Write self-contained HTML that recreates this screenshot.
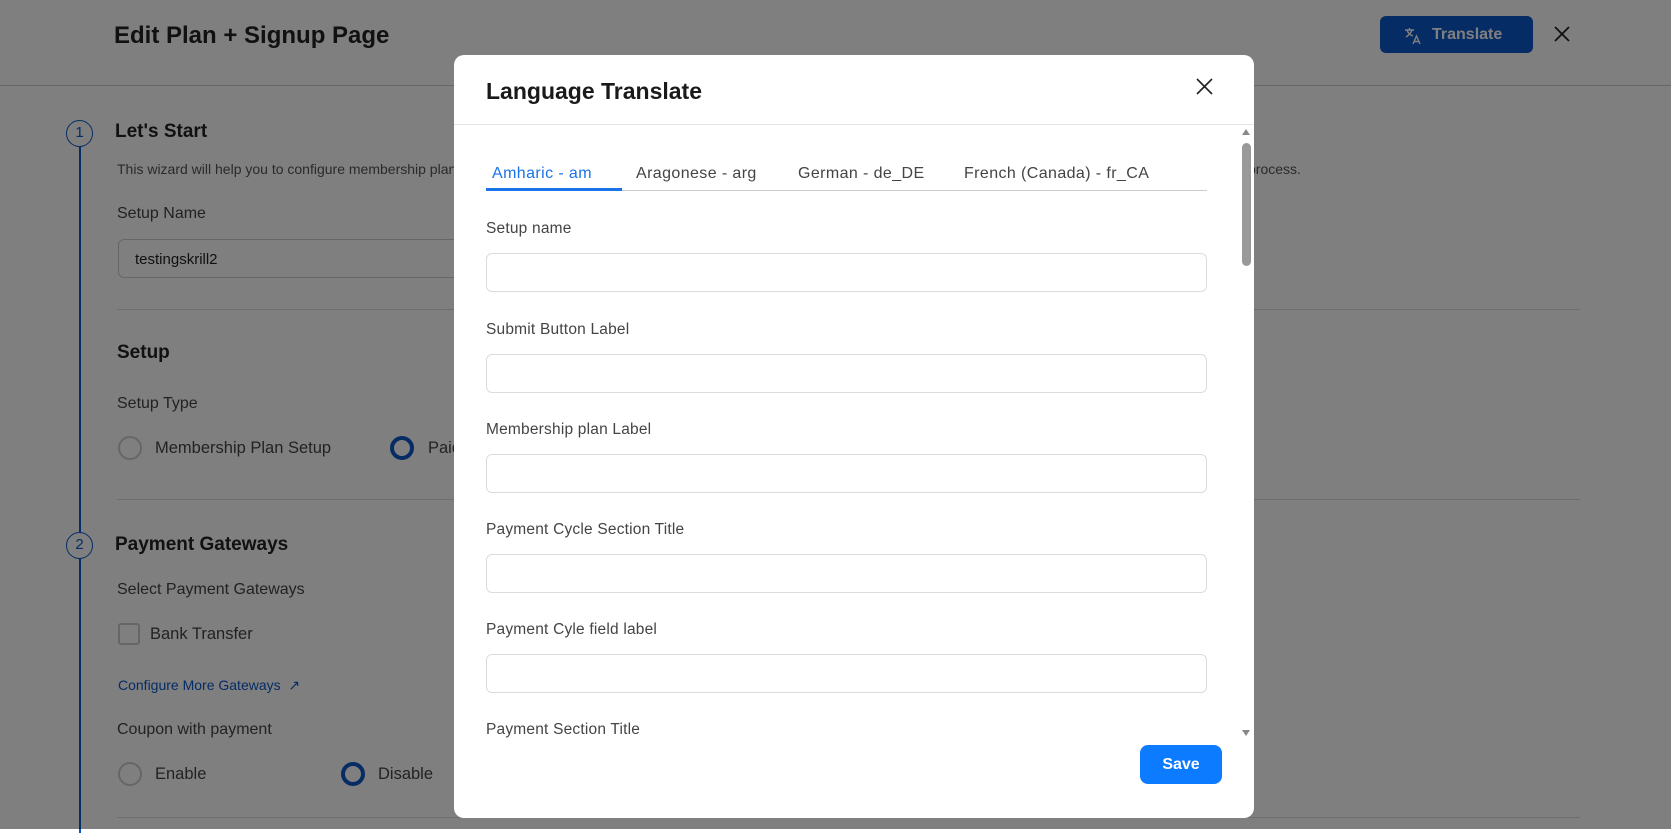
<!DOCTYPE html>
<html><head><meta charset="utf-8"><style>
*{box-sizing:border-box;margin:0;padding:0}
body{width:1671px;height:829px;overflow:hidden;background:#fff;font-family:"Liberation Sans",sans-serif;position:relative;color:#333}
.a{position:absolute;white-space:nowrap}
.hr{position:absolute;height:1px;background:#ddd}
.radio{position:absolute;width:24px;height:24px;border-radius:50%;border:2px solid #ccc}
.radio.on{border:4px solid #0a58ca}
.ov{position:absolute;left:0;top:0;width:1671px;height:829px;background:rgba(0,0,0,.5)}
.modal{position:absolute;left:454px;top:55px;width:800px;height:763px;background:#fff;border-radius:10px;overflow:hidden}
.lbl{position:absolute;left:32px;font-size:15.5px;color:#444;letter-spacing:.2px}
.inp{position:absolute;left:32px;width:721px;height:39px;border:1px solid #dcdcdc;border-radius:6px}
.tab{font-size:16px;letter-spacing:.4px;top:110px}
</style></head><body>
<div class="a" style="left:114px;top:22px;font-size:24px;font-weight:bold;color:#222">Edit Plan + Signup Page</div>
<div class="a" style="left:1380px;top:16px;width:153px;height:37px;background:#0a58ca;border-radius:6px;color:#fff;font-size:16px;font-weight:bold;padding:10px 0 0 52px">Translate</div>
<svg class="a" style="left:1403px;top:26px" width="20" height="20" viewBox="0 0 20 20" fill="none" stroke="#fff" stroke-width="1.4"><path d="M2 4h9M6.5 2v2M4 4c1 3 3 5 6 6M9 4c-1 3-3 5-6 7M10 18l3.5-8 3.5 8M11 15.5h5"/></svg>
<svg class="a" style="left:1553px;top:25px" width="18" height="18" viewBox="0 0 18 18" stroke="#222" stroke-width="1.8"><path d="M2 2l14 14M16 2L2 16"/></svg>
<div class="hr" style="left:0;top:85px;width:1671px;background:#ccc"></div>
<div class="a" style="left:79px;top:133px;width:2px;height:700px;background:#0a58ca"></div>
<div class="a" style="left:66px;top:120px;width:27px;height:27px;border-radius:50%;border:1.5px solid #0a58ca;background:#fff;color:#0a58ca;font-size:15px;text-align:center;line-height:24px">1</div>
<div class="a" style="left:66px;top:532px;width:27px;height:27px;border-radius:50%;border:1.5px solid #0a58ca;background:#fff;color:#0a58ca;font-size:15px;text-align:center;line-height:24px">2</div>
<div class="a" style="left:115px;top:121px;font-size:19px;font-weight:bold;color:#222">Let's Start</div>
<div class="a" style="left:117px;top:161px;font-size:14px;color:#555">This wizard will help you to configure membership plans and signup page for the registration</div>
<div class="a" style="left:1248px;top:161px;font-size:14px;color:#555">process.</div>
<div class="a" style="left:117px;top:205px;font-size:16px;color:#444">Setup Name</div>
<div class="a" style="left:118px;top:239px;width:800px;height:39px;border:1px solid #ccc;border-radius:6px;font-size:15px;padding:11px 0 0 16px;color:#222">testingskrill2</div>
<div class="hr" style="left:117px;top:309px;width:1463px"></div>
<div class="a" style="left:117px;top:342px;font-size:19px;font-weight:bold;color:#222">Setup</div>
<div class="a" style="left:117px;top:395px;font-size:16px;color:#444">Setup Type</div>
<div class="radio" style="left:118px;top:436px"></div>
<div class="a" style="left:155px;top:439px;font-size:16.5px;color:#444">Membership Plan Setup</div>
<div class="radio on" style="left:390px;top:436px"></div>
<div class="a" style="left:428px;top:439px;font-size:16.5px;color:#444">Paid</div>
<div class="hr" style="left:117px;top:499px;width:1463px"></div>
<div class="a" style="left:115px;top:534px;font-size:19px;font-weight:bold;color:#222">Payment Gateways</div>
<div class="a" style="left:117px;top:581px;font-size:16px;color:#444">Select Payment Gateways</div>
<div class="a" style="left:118px;top:623px;width:22px;height:22px;border:2px solid #ccc;border-radius:3px"></div>
<div class="a" style="left:150px;top:625px;font-size:16.5px;color:#444">Bank Transfer</div>
<div class="a" style="left:118px;top:677px;font-size:14px;color:#0a58ca">Configure More Gateways &nbsp;↗</div>
<div class="a" style="left:117px;top:721px;font-size:16px;color:#444">Coupon with payment</div>
<div class="radio" style="left:118px;top:762px"></div>
<div class="a" style="left:155px;top:765px;font-size:16.5px;color:#444">Enable</div>
<div class="radio on" style="left:341px;top:762px"></div>
<div class="a" style="left:378px;top:765px;font-size:16.5px;color:#444">Disable</div>
<div class="hr" style="left:117px;top:817px;width:1463px"></div>
<div class="ov"></div>
<div class="modal">
<div class="a" style="left:32px;top:23px;font-size:23px;font-weight:bold;color:#1a1a1a">Language Translate</div>
<svg class="a" style="left:742px;top:23px" width="17" height="17" viewBox="0 0 17 17" stroke="#222" stroke-width="1.6"><path d="M1 1l15 15M16 1L1 16"/></svg>
<div class="hr" style="left:0;top:69px;width:800px;background:#e5e5e5"></div>
<div class="a tab" style="left:38px;color:#1a73e8">Amharic - am</div>
<div class="a tab" style="left:182px;color:#444">Aragonese - arg</div>
<div class="a tab" style="left:344px;color:#444">German - de_DE</div>
<div class="a tab" style="left:510px;color:#444">French (Canada) - fr_CA</div>
<div class="hr" style="left:32px;top:135px;width:721px;background:#ccc"></div>
<div class="a" style="left:32px;top:133px;width:136px;height:3px;background:#1a73e8"></div>
<div class="lbl" style="top:165px">Setup name</div><div class="inp" style="top:198px"></div>
<div class="lbl" style="top:266px">Submit Button Label</div><div class="inp" style="top:299px"></div>
<div class="lbl" style="top:366px">Membership plan Label</div><div class="inp" style="top:399px"></div>
<div class="lbl" style="top:466px">Payment Cycle Section Title</div><div class="inp" style="top:499px"></div>
<div class="lbl" style="top:566px">Payment Cyle field label</div><div class="inp" style="top:599px"></div>
<div class="lbl" style="top:666px">Payment Section Title</div>
<div class="a" style="left:788px;top:74px;width:0;height:0;border-left:4.5px solid transparent;border-right:4.5px solid transparent;border-bottom:6px solid #888"></div>
<div class="a" style="left:788px;top:88px;width:9px;height:123px;border-radius:5px;background:#999"></div>
<div class="a" style="left:788px;top:675px;width:0;height:0;border-left:4.5px solid transparent;border-right:4.5px solid transparent;border-top:6px solid #888"></div>
<div class="a" style="left:686px;top:690px;width:82px;height:39px;background:#0d7bff;border-radius:8px;color:#fff;font-weight:bold;font-size:16px;text-align:center;line-height:39px">Save</div>
</div>
</body></html>
